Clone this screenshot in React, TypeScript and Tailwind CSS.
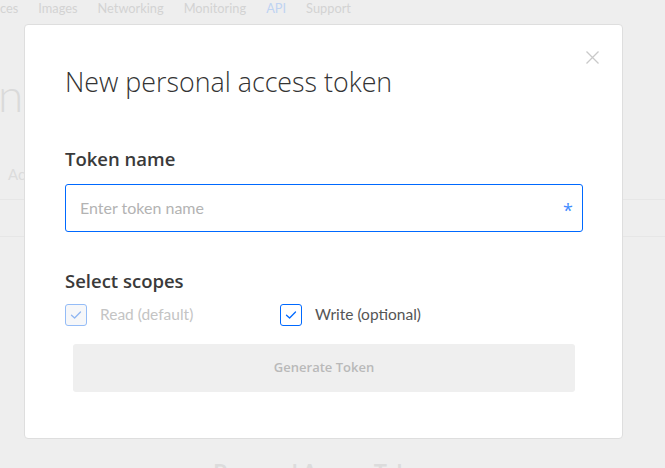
import { useState } from "react";

const lato = { fontFamily: "Lato, 'Open Sans', sans-serif" };
const open = { fontFamily: "'Open Sans', Lato, sans-serif" };

function CheckIcon({ color }: { color: string }) {
    return (
        <svg width="12" height="10" viewBox="0 0 12 10" fill="none">
            <path d="M1.5 5.2 L4.6 8 L10.5 2" stroke={color} strokeWidth="1.3" strokeLinecap="round" strokeLinejoin="round" />
        </svg>
    );
}

function Scope({ label, disabled, checked, onToggle }: { label: string; disabled?: boolean; checked: boolean; onToggle?: () => void }) {
    return (
        <label className="flex items-center gap-[13px] w-[215px] cursor-pointer" onClick={onToggle}>
            <span
                className={
                    disabled
                        ? "w-[22px] h-[22px] rounded-[3px] border border-[#94bcf7] bg-[#f6f7f9] flex items-center justify-center"
                        : "w-[22px] h-[22px] rounded-[3px] border border-[#0069ff] bg-white flex items-center justify-center"
                }
            >
                {checked && <CheckIcon color={disabled ? "#8fb6f2" : "#0069ff"} />}
            </span>
            <span className={disabled ? "text-[15.5px] text-[#c4c4c4]" : "text-[15.5px] text-[#555555]"}>{label}</span>
        </label>
    );
}

export default function App() {
    const [name, setName] = useState("");
    const [write, setWrite] = useState(true);

    return (
        <div className="relative w-[665px] h-[468px] overflow-hidden bg-[#eeeeee]" style={lato}>
            {/* Page behind the overlay */}
            <div className="flex gap-[20px] text-[12.8px] leading-[16px] text-[#d3d3d3]">
                <span>ces</span>
                <span>Images</span>
                <span>Networking</span>
                <span>Monitoring</span>
                <span className="text-[#bfd3f2]">API</span>
                <span>Support</span>
            </div>
            <div className="mt-[56px] -ml-[2px] text-[46px] leading-[46px] font-light text-[#dadada]">ns</div>
            <div className="mt-[46px] ml-[8px] text-[15px] leading-[20px] text-[#dcdcdc]">Ac</div>
            <div className="mt-[15px] border-t border-[#e6e6e6]" />
            <div className="mt-[36px] border-t border-[#e6e6e6]" />
            <div className="mt-[219px] -ml-[10px] text-center text-[22px] font-bold text-[#dcdcdc]">Personal Access Tokens</div>

            {/* Modal */}
            <div className="absolute left-[24px] top-[24px] w-[599px] h-[415px] bg-white rounded-[4px] border border-[#dedede] pl-[40px] pr-[39px] pt-[40px]">
                <button className="absolute right-[22px] top-[25px] p-[1px]" aria-label="Close">
                    <svg width="13" height="13" viewBox="0 0 13 13">
                        <path d="M0.5 0.5 L12.5 12.5 M12.5 0.5 L0.5 12.5" stroke="#c9c9c9" strokeWidth="1.3" />
                    </svg>
                </button>

                <h2 className="text-[26.8px] leading-[34px] font-light text-[#333333]" style={open}>
                    New personal access token
                </h2>

                <div className="mt-[48px] text-[18.5px] leading-[24px] font-semibold text-[#3a3a3a]" style={open}>
                    Token name
                </div>
                <div className="mt-[13px] h-[48px] rounded-[3px] border border-[#0069ff] flex items-center pl-[14px] pr-[9px]">
                    <input
                        value={name}
                        onChange={(e) => setName(e.target.value)}
                        placeholder="Enter token name"
                        className="flex-1 outline-none text-[16px] text-[#333] placeholder:text-[#b3b3b3]"
                        style={lato}
                    />
                    <span className="text-[#3f8cff] text-[18px] leading-[18px] pt-[4px]" style={open}>
                        *
                    </span>
                </div>

                <div className="mt-[37px] text-[18.5px] leading-[24px] font-semibold text-[#3a3a3a]" style={open}>
                    Select scopes
                </div>
                <div className="mt-[11px] flex h-[22px]">
                    <Scope label="Read (default)" disabled checked />
                    <Scope label="Write (optional)" checked={write} onToggle={() => setWrite(!write)} />
                </div>

                <button
                    disabled={!name}
                    className="mt-[18px] ml-[8px] w-[502px] h-[48px] rounded-[3px] bg-[#efefef] text-[13px] font-semibold text-[#b9b9b9]"
                    style={open}
                >
                    Generate Token
                </button>
            </div>
        </div>
    );
}
